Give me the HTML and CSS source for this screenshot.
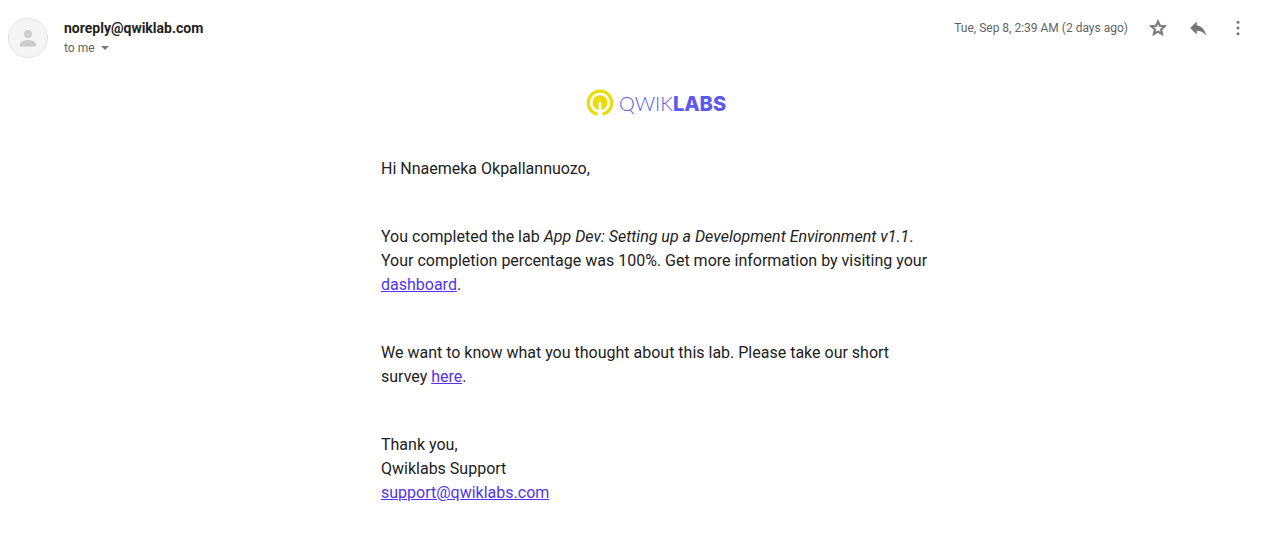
FILE: index.html
```html
<!DOCTYPE html>
<html lang="en">
<head>
<meta charset="utf-8">
<meta name="viewport" content="width=device-width, initial-scale=1">
<title>Message from noreply@qwiklab.com</title>
<link rel="stylesheet" href="styles.css">
</head>
<body>
<article class="message">
  <header class="message-header">
    <svg class="avatar" viewBox="0 0 40 40" aria-hidden="true">
      <circle cx="20" cy="20" r="19.5" fill="#f5f5f5" stroke="#e2e2e2"/>
      <circle cx="20" cy="16" r="4" fill="#ccc"/>
      <path d="M12 28.5v-2.3c0-2.800 5.300-4.200 8-4.200s8 1.400 8 4.200v2.300z" fill="#ccc"/>
    </svg>
    <div class="sender">
      <h1 class="sender-name">noreply@qwiklab.com</h1>
      <button class="recipients" type="button">to me
        <svg class="caret" viewBox="0 0 8 4" aria-hidden="true"><path d="M0 0h8L4 4z" fill="#757575"/></svg>
      </button>
    </div>
    <div class="actions">
      <time class="date" datetime="2020-09-08T02:39">Tue, Sep 8, 2:39 AM (2 days ago)</time>
      <button class="icon-button" type="button" aria-label="Star">
        <svg viewBox="0 0 24 24"><path d="M22 9.240l-7.190-.62L12 2 9.190 8.630 2 9.240l5.460 4.730L5.820 21 12 17.270 18.180 21l-1.630-7.030L22 9.240zM12 15.400l-3.760 2.270 1-4.280-3.320-2.880 4.380-.38L12 6.100l1.710 4.040 4.380.38-3.320 2.880 1 4.280L12 15.400z" stroke="#757575" stroke-width=".9"/></svg>
      </button>
      <button class="icon-button" type="button" aria-label="Reply">
        <svg viewBox="0 0 24 24"><path d="M10 9V5l-7 7 7 7v-4.100c5 0 8.500 1.600 11 5.100-1-5-4-10-11-11z" stroke="#757575" stroke-width=".8"/></svg>
      </button>
      <button class="icon-button" type="button" aria-label="More">
        <svg viewBox="0 0 24 24"><circle cx="12" cy="5.200" r="1.800"/><circle cx="12" cy="12" r="1.800"/><circle cx="12" cy="18.800" r="1.800"/></svg>
      </button>
    </div>
  </header>
  <div class="message-body">
    <div class="logo">
      <svg class="logo-mark" viewBox="0 0 28 28" aria-hidden="true">
        <path d="M11.500 25.300A11.700 11.700 0 1 1 16.500 25.300" fill="none" stroke="#e8dc0a" stroke-width="3.200"/>
        <path d="M12.600 20.900A7.400 7.400 0 1 1 15.400 20.900V14.500a1.400 1.400 0 0 0-2.800 0z" fill="#e8dc0a"/>
      </svg>
      <span class="logo-text">QWIK<b class="logo-strong">LABS</b></span>
    </div>
    <p>Hi Nnaemeka Okpallannuozo,</p>
    <p>You completed the lab <em>App Dev: Setting up a Development Environment v1.1</em>. Your completion percentage was 100%. Get more information by visiting your <a href="#dashboard">dashboard</a>.</p>
    <p>We want to know what you thought about this lab. Please take our short survey <a href="#survey">here</a>.</p>
    <p>Thank you,<br>Qwiklabs Support<br><a href="mailto:support@qwiklabs.com">support@qwiklabs.com</a></p>
  </div>
</article>
</body>
</html>
```
FILE: styles.css
```css
* {
  box-sizing: border-box;
}

body {
  margin: 0;
  background: #fff;
  color: #222;
  font-family: Roboto, "Liberation Sans", sans-serif;
}

button {
  padding: 0;
  border: 0;
  background: none;
  font: inherit;
  cursor: pointer;
}

.message {
  padding: 18px 15px 30px 8px;
}

.message-header {
  display: flex;
  align-items: flex-start;
  gap: 16px;
}

.avatar {
  width: 40px;
  height: 40px;
  flex: none;
}

.sender {
  flex: 1;
  min-width: 0;
}

.sender-name {
  margin: 0;
  font-size: 14px;
  font-weight: 700;
  line-height: 20px;
}

.recipients {
  display: flex;
  align-items: center;
  gap: 6px;
  color: #5f6368;
  font-size: 12px;
  line-height: 20px;
}

.caret {
  width: 8px;
  height: 4px;
}

.actions {
  display: flex;
  align-items: center;
  gap: 20px;
}

.date {
  color: #5f6368;
  font-size: 12px;
  line-height: 20px;
}

.icon-button {
  width: 20px;
  height: 20px;
}

.icon-button svg {
  display: block;
  width: 20px;
  height: 20px;
  fill: #757575;
}

.message-body {
  max-width: 606px;
  margin: 0 auto;
  padding-left: 56px;
  font-size: 16px;
  line-height: 24px;
}

.logo {
  display: flex;
  align-items: center;
  justify-content: center;
  gap: 5px;
  margin: 31px 0 40px;
}

.logo-mark {
  width: 28px;
  height: 28px;
}

.logo-text {
  color: #5a5aec;
  font-family: Lato, sans-serif;
  font-size: 20px;
  font-weight: 300;
  line-height: 24px;
}

.logo-strong {
  font-family: Inter, Lato, sans-serif;
  font-weight: 800;
}

.message-body p {
  margin: 0 0 44px;
}

.message-body p:last-child {
  margin-bottom: 0;
}

.message-body a {
  color: #5333ed;
}
```
